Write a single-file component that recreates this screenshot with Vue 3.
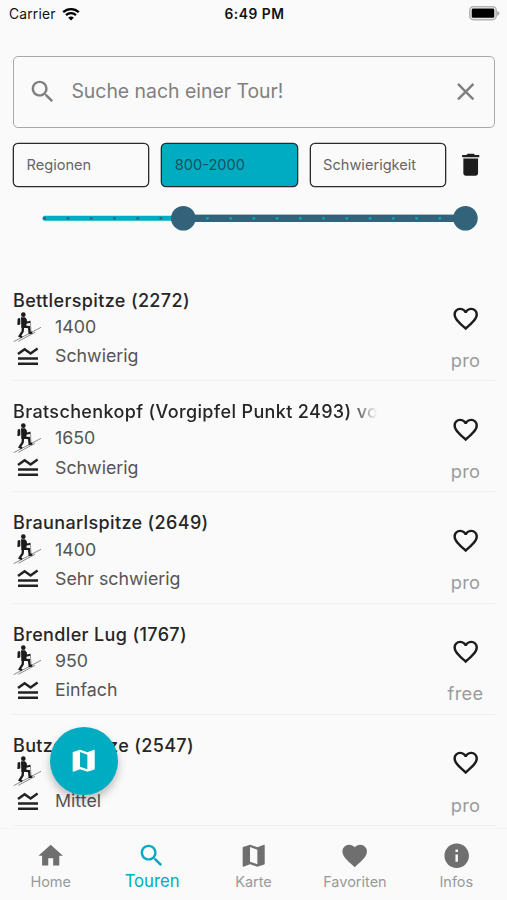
<template>
  <div class="app">
    <div class="status-bar">
      <div class="carrier">
        <span>Carrier</span>
        <svg class="wifi" viewBox="0 0 18 14">
          <path d="M1.2 5.2a11.2 11.2 0 0 1 15.6 0" />
          <path d="M4 8.2a7.2 7.2 0 0 1 10 0" />
          <path class="wifi-dot" d="M9 13.6 6.2 10.7a4.1 4.1 0 0 1 5.6 0z" />
        </svg>
      </div>
      <div class="time">6:49 PM</div>
      <div class="battery">
        <svg viewBox="0 0 31 15">
          <rect x="0.8" y="0.8" width="26.4" height="12.8" rx="3.6" fill="#fafafa" stroke="#b4b4b4" stroke-width="1.6" />
          <rect x="2.7" y="2.6" width="22.6" height="9.2" rx="1.4" fill="#000" />
          <path d="M28.2 4.7q2.2 1 2.2 2.6t-2.2 2.6z" fill="#a8a8a8" />
        </svg>
      </div>
    </div>

    <div class="search-box">
      <svg class="icon search-icon" viewBox="0 0 24 24"><path :d="icons.search" /></svg>
      <span class="placeholder">Suche nach einer Tour!</span>
      <svg class="icon" viewBox="0 0 24 24"><path :d="icons.close" /></svg>
    </div>

    <div class="filters">
      <button
        v-for="filter in filters"
        :key="filter"
        @click="selectFilter(filter)"
        :class="['filter-btn', { 'active': selectedFilter === filter }]"
      >
        {{ filter }}
      </button>
      <svg class="icon trash" viewBox="0 0 24 24"><path :d="icons.trash" /></svg>
    </div>

    <div class="slider">
      <svg viewBox="0 0 481 26">
        <rect x="29.5" y="10.8" width="141" height="5" rx="2.5" fill="#00acc1" />
        <rect x="170" y="9.6" width="282" height="7.4" fill="#32637b" />
        <circle
          v-for="n in 18"
          :key="n"
          :cx="31.7 + (n - 1) * 23.24"
          cy="13.3"
          r="1.4"
          :fill="n < 7 ? '#32637b' : '#00acc1'"
        />
        <circle cx="170.3" cy="13.3" r="12.3" fill="#32637b" />
        <circle cx="452.4" cy="13.3" r="12.3" fill="#32637b" />
      </svg>
    </div>

    <div class="tour-list">
      <div v-for="tour in tours" :key="tour.name" class="tour">
        <div class="tour-info">
          <div :class="['tour-name', { 'faded': tour.long }]">{{ tour.name }}</div>
          <div class="tour-row">
            <svg class="skier" viewBox="0 0 84 90">
              <path d="M2 89 84 46M16 88 66 61" stroke="#8a8a8a" stroke-width="3" />
              <circle cx="31" cy="8" r="7" fill="#1c1c1c" />
              <path d="M14 20q5-4 8 0v17q-5 4-9 1z" fill="#1c1c1c" />
              <path d="M24 16h12l5 6-1 25-15 1z" fill="#1c1c1c" />
              <path d="M35 20 41 32 52 29" stroke="#1c1c1c" stroke-width="6" />
              <path d="M31 44 48 45 50 63 58 62" stroke="#1c1c1c" stroke-width="7" />
              <path d="M30 43 29 58 20 72 27 76" stroke="#1c1c1c" stroke-width="7" />
              <path d="M52 26 54 60" stroke="#555" stroke-width="1.8" />
            </svg>
            <span>{{ tour.meters }}</span>
          </div>
          <div class="tour-row">
            <svg class="level" viewBox="0 0 22 20">
              <path d="M1 8 7.6 3.2 13.6 7.5 20.6 2.6M1 12.4H21M1 17.8H21" />
            </svg>
            <span>{{ tour.level }}</span>
          </div>
        </div>
        <div class="tour-side">
          <svg class="icon heart" viewBox="0 0 24 24"><path :d="icons.heartOutline" /></svg>
          <span>{{ tour.plan }}</span>
        </div>
      </div>
    </div>

    <div class="nav">
      <div
        v-for="item in navItems"
        :key="item.label"
        :class="['nav-item', { 'active': selectedNav === item.label }]"
        @click="selectedNav = item.label"
      >
        <svg class="icon" viewBox="0 0 24 24"><path :d="icons[item.icon]" /></svg>
        <span>{{ item.label }}</span>
      </div>
    </div>

    <button class="fab">
      <svg class="icon" viewBox="0 0 24 24"><path :d="icons.map" /></svg>
    </button>
  </div>
</template>

<script setup>
import { ref } from 'vue';

const icons = {
  search: 'M15.5 14h-.79l-.28-.27C15.41 12.59 16 11.11 16 9.5 16 5.91 13.09 3 9.5 3S3 5.91 3 9.5 5.91 16 9.5 16c1.61 0 3.09-.59 4.23-1.57l.27.28v.79l5 4.99L20.49 19l-4.99-5zm-6 0C7.01 14 5 11.99 5 9.5S7.01 5 9.5 5 14 7.01 14 9.5 11.99 14 9.5 14z',
  close: 'M19 6.41 17.59 5 12 10.59 6.41 5 5 6.41 10.59 12 5 17.59 6.41 19 12 13.41 17.59 19 19 17.59 13.41 12z',
  trash: 'M6 19c0 1.1.9 2 2 2h8c1.1 0 2-.9 2-2V7H6v12zM19 4h-3.5l-1-1h-5l-1 1H5v2h14V4z',
  heartOutline: 'M16.5 3c-1.74 0-3.41.81-4.5 2.09C10.91 3.81 9.24 3 7.5 3 4.42 3 2 5.42 2 8.5c0 3.78 3.4 6.86 8.55 11.54L12 21.35l1.45-1.32C18.6 15.36 22 12.28 22 8.5 22 5.42 19.58 3 16.5 3zm-4.4 15.55-.1.1-.1-.1C7.14 14.24 4 11.39 4 8.5 4 6.5 5.5 5 7.5 5c1.54 0 3.04.99 3.57 2.36h1.87C13.46 5.99 14.96 5 16.5 5c2 0 3.5 1.5 3.5 3.5 0 2.89-3.14 5.74-7.9 10.05z',
  heart: 'M12 21.35l-1.45-1.32C5.4 15.36 2 12.28 2 8.5 2 5.42 4.42 3 7.5 3c1.74 0 3.41.81 4.5 2.09C13.09 3.81 14.76 3 16.5 3 19.58 3 22 5.42 22 8.5c0 3.78-3.4 6.86-8.55 11.54L12 21.35z',
  map: 'M20.5 3l-.16.03L15 5.1 9 3 3.36 4.9c-.21.07-.36.25-.36.48V20.5c0 .28.22.5.5.5l.16-.03L9 18.9l6 2.1 5.64-1.9c.21-.07.36-.25.36-.48V3.5c0-.28-.22-.5-.5-.5zM15 19l-6-2.11V5l6 2.11V19z',
  home: 'M10 20v-6h4v6h5v-8h3L12 3 2 12h3v8z',
  info: 'M12 2C6.48 2 2 6.48 2 12s4.48 10 10 10 10-4.48 10-10S17.52 2 12 2zm1 15h-2v-6h2v6zm0-8h-2V7h2v2z',
};

const filters = ['Regionen', '800-2000', 'Schwierigkeit'];
const selectedFilter = ref('800-2000');

const tours = [
  { name: 'Bettlerspitze (2272)', meters: 1400, level: 'Schwierig', plan: 'pro' },
  { name: 'Bratschenkopf (Vorgipfel Punkt 2493) vo', meters: 1650, level: 'Schwierig', plan: 'pro', long: true },
  { name: 'Braunarlspitze (2649)', meters: 1400, level: 'Sehr schwierig', plan: 'pro' },
  { name: 'Brendler Lug (1767)', meters: 950, level: 'Einfach', plan: 'free' },
  { name: 'Butzenspitze (2547)', meters: 1300, level: 'Mittel', plan: 'pro' },
];

const navItems = [
  { label: 'Home', icon: 'home' },
  { label: 'Touren', icon: 'search' },
  { label: 'Karte', icon: 'map' },
  { label: 'Favoriten', icon: 'heart' },
  { label: 'Infos', icon: 'info' },
];
const selectedNav = ref('Touren');

const selectFilter = (filter) => {
  selectedFilter.value = filter;
};
</script>

<style>
body {
  margin: 0;
  background: #fafafa;
}
</style>

<style scoped>
.app {
  position: relative;
  display: flex;
  flex-direction: column;
  width: 507px;
  height: 900px;
  overflow: hidden;
  background: #fafafa;
  font-family: Inter, 'Liberation Sans', sans-serif;
}

.icon {
  display: block;
  flex: none;
  width: 29.4px;
  height: 29.4px;
  fill: currentColor;
}

.status-bar {
  display: grid;
  grid-template-columns: 1fr auto 1fr;
  align-items: center;
  height: 27px;
  padding: 0 7px 0 9px;
  color: #111;
  font-size: 13.8px;
}

.carrier {
  display: flex;
  align-items: center;
  gap: 6px;
  letter-spacing: 0.2px;
}

.wifi {
  width: 18px;
  height: 14px;
  fill: none;
  stroke: #000;
  stroke-width: 2.3;
}

.wifi-dot {
  fill: #000;
  stroke: none;
}

.time {
  font-weight: 600;
  letter-spacing: 0.55px;
}

.battery {
  display: flex;
  justify-content: flex-end;
}

.battery svg {
  width: 31px;
  height: 15px;
}

.search-box {
  display: flex;
  align-items: center;
  box-sizing: border-box;
  height: 72px;
  margin: 29px 12px 0 13px;
  padding: 0 14px;
  border: 1.5px solid #a9a9a9;
  border-radius: 5px;
  color: #808080;
}

.placeholder {
  flex: 1;
  margin-left: 14px;
  padding-bottom: 3px;
  font-size: 19.4px;
}

.filters {
  display: flex;
  align-items: center;
  gap: 12px;
  height: 45px;
  margin: 14px 0 0 13px;
}

.filter-btn {
  box-sizing: border-box;
  width: 136.3px;
  height: 44px;
  padding: 0 12.5px;
  background: #fafafa;
  border: 1.5px solid #2a2a2a;
  border-radius: 5px;
  box-shadow: 0 0 0 0.3px #2a2a2a;
  color: #666;
  font-family: inherit;
  font-size: 14.6px;
  text-align: left;
}

.filter-btn.active {
  background: #00acc1;
  color: #17535f;
}

.trash {
  margin-left: -2px;
  color: #1c1c1c;
}

.slider {
  height: 26px;
  margin: 18px 13px 0;
}

.slider svg {
  display: block;
  width: 481px;
  height: 26px;
}

.tour-list {
  flex: 1;
  margin: 39px 12px 0 13px;
  overflow: hidden;
}

.tour {
  display: flex;
  justify-content: space-between;
  box-sizing: border-box;
  height: 111.2px;
  padding-top: 20px;
  border-bottom: 1px solid #eee;
}

.tour-name {
  width: 366px;
  height: 22px;
  color: #262626;
  font-size: 18px;
  font-weight: 500;
  letter-spacing: 0.36px;
  line-height: 22px;
  white-space: nowrap;
}

.tour-name.faded {
  mask-image: linear-gradient(to right, #000 338px, transparent 364px);
}

.tour-row {
  display: flex;
  align-items: center;
  height: 29.3px;
  color: #555;
  font-size: 17.8px;
}

.skier {
  width: 28px;
  height: 30px;
  margin-right: 14px;
  fill: none;
}

.level {
  width: 22px;
  height: 20px;
  margin: 0 16px 0 4px;
  fill: none;
  stroke: #222;
  stroke-width: 2.5;
}

.tour-side {
  display: flex;
  flex-direction: column;
  align-items: center;
  width: 59px;
  color: #9b9b9b;
  font-size: 18.3px;
  letter-spacing: 0.3px;
}

.heart {
  margin: 13.5px 0 16px;
  color: #1c1c1c;
}

.tour-side span {
  line-height: 22px;
}

.nav {
  display: flex;
  height: 71px;
  border-top: 1px solid #f4f4f4;
}

.nav-item {
  display: flex;
  flex: 1;
  flex-direction: column;
  align-items: center;
  padding-top: 12px;
  color: #999;
  font-size: 14.5px;
  line-height: 23px;
}

.nav-item .icon {
  color: #6f6f6f;
}

.nav-item.active,
.nav-item.active .icon {
  color: #00acc1;
}

.nav-item.active {
  font-size: 16.7px;
  line-height: 22px;
}

.fab {
  position: absolute;
  left: 50px;
  top: 727px;
  display: flex;
  align-items: center;
  justify-content: center;
  width: 68px;
  height: 68px;
  padding: 0;
  border: none;
  border-radius: 50%;
  background: #00acc1;
  box-shadow: 0 5px 8px rgba(0, 0, 0, 0.25);
  color: #fff;
}
</style>
